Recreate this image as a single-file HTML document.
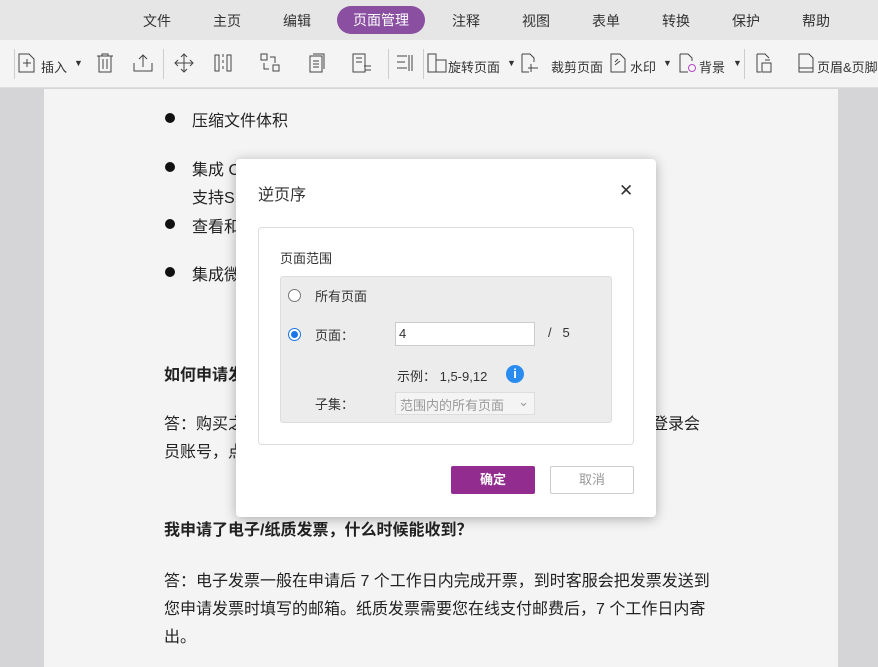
<!DOCTYPE html>
<html><head><meta charset="utf-8"><style>
*{margin:0;padding:0;box-sizing:border-box}
body{width:878px;height:667px;overflow:hidden;position:relative;font-family:"Liberation Sans","Noto Sans CJK SC",sans-serif;background:#d5d5d7;color:#333}
.menu{position:absolute;left:0;top:0;width:878px;height:40px;background:#e6e6e6}
.menu span{position:absolute;top:11px;font-size:14px;color:#333}
.menu .act{top:6px;height:28px;line-height:28px;padding:0 16px;background:#8a4fa0;color:#fff;border-radius:14px;font-size:14px}
.tb{position:absolute;left:0;top:40px;width:878px;height:48px;background:#f4f4f4;border-bottom:1px solid #ddd}
.tb svg{position:absolute;top:13px}
.tb .t{position:absolute;top:17px;font-size:13px;color:#333}
.sep{position:absolute;top:9px;width:1px;height:30px;background:#ccc}
.page{position:absolute;left:44px;top:89px;width:794px;height:578px;background:#f4f4f4}
.p{position:absolute;font-size:16px;color:#222;white-space:nowrap}
.b{font-weight:bold}
.dot{position:absolute;left:165px;width:10px;height:10px;border-radius:50%;background:#111}
.dlg{position:absolute;left:236px;top:159px;width:420px;height:358px;background:#fff;border-radius:4px;box-shadow:0 2px 12px rgba(0,0,0,.3)}
</style></head><body>
<div class="menu">
<span style="left:143px">文件</span><span style="left:213px">主页</span><span style="left:283px">编辑</span>
<span class="act" style="left:337px">页面管理</span>
<span style="left:452px">注释</span><span style="left:522px">视图</span><span style="left:592px">表单</span><span style="left:662px">转换</span><span style="left:732px">保护</span><span style="left:802px">帮助</span>
</div>
<div class="tb">
<div class="sep" style="left:14px"></div>
<svg style="left:18px" width="18" height="20" fill="none" stroke="#444"><path d="M1 1h10l5 5v13H1z M5 10h8 M9 6v8"/></svg>
<span class="t" style="left:41px">插入</span><span class="t" style="left:74px;top:18px;font-size:9px">▼</span>
<svg style="left:96px" width="18" height="20" fill="none" stroke="#444"><path d="M1 3h16 M6 3V1h6v2 M3 3v16h12V3 M7 6v10 M11 6v10"/></svg>
<svg style="left:133px" width="20" height="20" fill="none" stroke="#444"><path d="M1 10v8h18v-8 M10 14V2 M6 6l4-4 4 4"/></svg>
<div class="sep" style="left:163px"></div>
<svg style="left:174px" width="20" height="20" fill="none" stroke="#444"><path d="M10 1v18 M1 10h18 M7 4l3-3 3 3 M7 16l3 3 3-3 M4 7l-3 3 3 3 M16 7l3 3-3 3"/></svg>
<svg style="left:214px" width="18" height="20" fill="none" stroke="#444"><path d="M1 2h4v16H1z M13 2h4v16h-4z M9 1v3 M9 7v3 M9 13v3"/></svg>
<svg style="left:260px" width="20" height="20" fill="none" stroke="#444"><path d="M1 1h6v6H1z M13 12h6v6h-6z M10 4h5v6 M9 16H4v-6"/></svg>
<svg style="left:307px" width="18" height="20" fill="none" stroke="#444"><path d="M3 3h12v16H3z M6 1h11v15 M6 8h6 M6 11h6 M6 14h6"/></svg>
<svg style="left:352px" width="20" height="20" fill="none" stroke="#444"><path d="M1 1h12v18H1z M4 5h6 M4 9h6 M12 13h7 M13 17h6"/></svg>
<div class="sep" style="left:388px"></div>
<svg style="left:396px" width="18" height="20" fill="none" stroke="#444"><path d="M1 3h10 M1 9h8 M1 15h10 M13 2v16 M16 2v16"/></svg>
<div class="sep" style="left:423px"></div>
<svg style="left:427px" width="20" height="20" fill="none" stroke="#444"><path d="M1 1h8v18H1z M9 7h10v12H9"/></svg>
<span class="t" style="left:448px">旋转页面</span><span class="t" style="left:507px;top:18px;font-size:9px">▼</span>
<svg style="left:521px" width="18" height="20" fill="none" stroke="#444"><path d="M1 1h8l4 4v4 M1 1v18h7 M10 11v8 M7 15h10"/></svg>
<span class="t" style="left:551px">裁剪页面</span>
<svg style="left:610px" width="16" height="20" fill="none" stroke="#444"><path d="M1 1h9l5 5v13H1z M5 12l5-4 M5 9l3-3"/></svg>
<span class="t" style="left:630px">水印</span><span class="t" style="left:663px;top:18px;font-size:9px">▼</span>
<svg style="left:679px" width="18" height="20" fill="none" stroke="#444"><path d="M1 1h8l4 4v3 M1 1v18h8"/><circle cx="13" cy="15" r="3.5" stroke="#b04cc0"/></svg>
<span class="t" style="left:699px">背景</span><span class="t" style="left:733px;top:18px;font-size:9px">▼</span>
<div class="sep" style="left:744px"></div>
<svg style="left:756px" width="16" height="20" fill="none" stroke="#444"><path d="M1 1h8l4 4 M1 1v18h4 M6 10h9v9H6z M9 7h5"/></svg>
<svg style="left:798px" width="16" height="20" fill="none" stroke="#444"><path d="M1 1h10l4 4v14H1z M1 15h14"/></svg>
<span class="t" style="left:817px">页眉&amp;页脚</span>
</div>
<div class="page"></div>
<div class="dot" style="top:113px"></div><div class="p" style="left:192px;top:107px">压缩文件体积</div>
<div class="dot" style="top:162px"></div><div class="p" style="left:192px;top:156px">集成 O</div>
<div class="p" style="left:192px;top:184px">支持SI</div>
<div class="dot" style="top:219px"></div><div class="p" style="left:192px;top:213px">查看和</div>
<div class="dot" style="top:267px"></div><div class="p" style="left:192px;top:261px">集成微</div>
<div class="p b" style="left:164px;top:361px">如何申请发</div>
<div class="p" style="left:164px;top:410px">答：购买之</div>
<div class="p" style="left:652px;top:410px">登录会</div>
<div class="p" style="left:164px;top:438px">员账号，点</div>
<div class="p b" style="left:164px;top:516px">我申请了电子/纸质发票，什么时候能收到？</div>
<div class="p" style="left:164px;top:567px">答：电子发票一般在申请后 7 个工作日内完成开票，到时客服会把发票发送到</div>
<div class="p" style="left:164px;top:595px">您申请发票时填写的邮箱。纸质发票需要您在线支付邮费后，7 个工作日内寄</div>
<div class="p" style="left:164px;top:623px">出。</div>
<div class="dlg">
<div style="position:absolute;left:22px;top:22px;font-size:16px;color:#333">逆页序</div>
<div style="position:absolute;left:383px;top:22px;font-size:17px;color:#333">✕</div>
<div style="position:absolute;left:22px;top:68px;width:376px;height:218px;border:1px solid #ddd;border-radius:4px"></div>
<div style="position:absolute;left:44px;top:89px;font-size:13px;color:#333">页面范围</div>
<div style="position:absolute;left:44px;top:117px;width:332px;height:147px;background:#ececec;border:1px solid #ddd;border-radius:3px"></div>
<div style="position:absolute;left:52px;top:130px;width:13px;height:13px;border:1px solid #777;border-radius:50%;background:#fff"></div>
<div style="position:absolute;left:79px;top:127px;font-size:13px">所有页面</div>
<div style="position:absolute;left:52px;top:169px;width:13px;height:13px;border:1px solid #1a73e8;border-radius:50%;background:#fff"><div style="margin:2px;width:7px;height:7px;border-radius:50%;background:#1a73e8"></div></div>
<div style="position:absolute;left:79px;top:166px;font-size:13px">页面：</div>
<div style="position:absolute;left:159px;top:163px;width:140px;height:24px;background:#fff;border:1px solid #ccc;font-size:13px;padding:3px 3px">4</div>
<div style="position:absolute;left:312px;top:166px;font-size:13px">/&nbsp;&nbsp;&nbsp;5</div>
<div style="position:absolute;left:161px;top:207px;font-size:13px">示例：&nbsp;1,5-9,12</div>
<div style="position:absolute;left:270px;top:206px;width:18px;height:18px;border-radius:50%;background:#2b8cf0;color:#fff;font-size:13px;font-weight:bold;text-align:center;line-height:18px">i</div>
<div style="position:absolute;left:79px;top:235px;font-size:13px">子集：</div>
<div style="position:absolute;left:159px;top:233px;width:140px;height:23px;background:#f4f4f4;border:1px solid #ddd;font-size:13px;color:#999;padding:2px 4px">范围内的所有页面 <span style="position:absolute;right:5px;top:1px">⌄</span></div>
<div style="position:absolute;left:215px;top:307px;width:84px;height:28px;background:#922d8f;border-radius:2px;color:#fff;font-size:13px;font-weight:bold;text-align:center;line-height:28px">确定</div>
<div style="position:absolute;left:314px;top:307px;width:84px;height:28px;border:1px solid #ccc;border-radius:2px;color:#999;font-size:13px;text-align:center;line-height:26px">取消</div>
</div>
</body></html>
